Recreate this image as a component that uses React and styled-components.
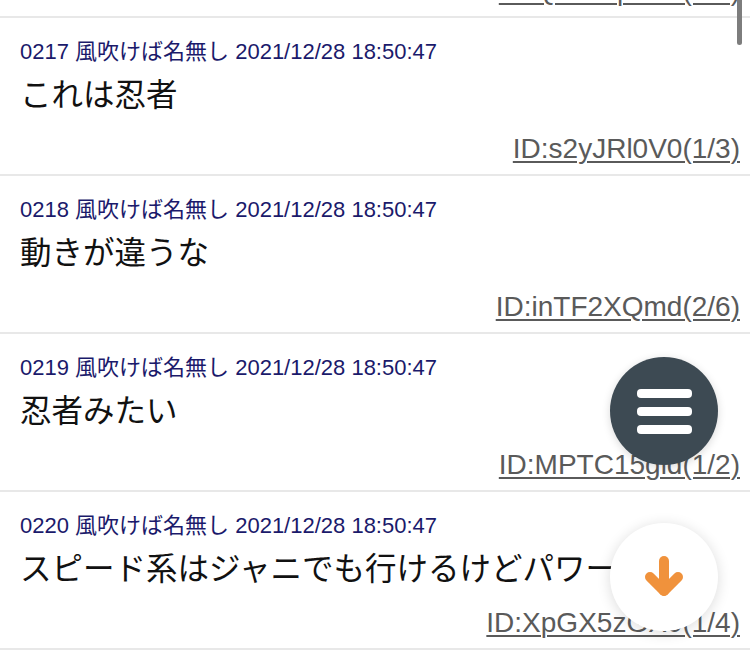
import styled, { createGlobalStyle } from "styled-components";

const posts = [
  { no: "0216", body: "せやな", id: "ID:Qk8vZp1aA(2/5)" },
  { no: "0217", body: "これは忍者", id: "ID:s2yJRl0V0(1/3)" },
  { no: "0218", body: "動きが違うな", id: "ID:inTF2XQmd(2/6)" },
  { no: "0219", body: "忍者みたい", id: "ID:MPTC15gld(1/2)" },
  {
    no: "0220",
    body: "スピード系はジャニでも行けるけどパワー系は",
    id: "ID:XpGX5zGX0(1/4)",
  },
];

export default function App() {
  return (
    <>
      <Global />
      <Screen>
        <List>
          {posts.map((p) => (
            <Post key={p.no}>
              <Meta>
                {p.no} 風吹けば名無し 2021/12/28 18:50:47
              </Meta>
              <Body>{p.body}</Body>
              <IdRow>
                <IdLink href="#">{p.id}</IdLink>
              </IdRow>
            </Post>
          ))}
        </List>
        <Scrollbar />
        <Fabs>
          <MenuButton aria-label="menu">
            <Bar />
            <Bar />
            <Bar />
          </MenuButton>
          <DownButton aria-label="down">
            <svg width="44" height="44" viewBox="0 0 44 44">
              <g
                fill="none"
                stroke="#f0923c"
                strokeWidth="10"
                strokeLinecap="round"
                strokeLinejoin="round"
              >
                <path d="M22 6 V36" />
                <path d="M8 22 L22 36 L36 22" />
              </g>
            </svg>
          </DownButton>
        </Fabs>
      </Screen>
    </>
  );
}

const Global = createGlobalStyle`
  html, body {
    margin: 0;
    padding: 0;
    background: #fff;
  }
  body {
    font-family: "Liberation Sans", Arial, "Noto Sans CJK JP", sans-serif;
  }
`;

const Screen = styled.div`
  position: relative;
  width: 750px;
  height: 656px;
  overflow: hidden;
  background: #fff;
`;

const List = styled.div`
  margin-top: -140px;
`;

const Post = styled.div`
  border-bottom: 2px solid #e8e8e8;
  padding: 20px 10px 8px 20px;
`;

const Meta = styled.div`
  color: #1b1a6b;
  font-size: 22px;
  line-height: 28px;
  white-space: nowrap;
`;

const Body = styled.div`
  margin-top: 6px;
  color: #111;
  font-size: 31.5px;
  line-height: 46px;
  white-space: nowrap;
  overflow: hidden;
`;

const IdRow = styled.div`
  display: flex;
  justify-content: flex-end;
  margin-top: 14px;
`;

const IdLink = styled.a`
  color: #5a5a5a;
  font-size: 28px;
  line-height: 34px;
  text-decoration: underline;
  text-decoration-thickness: 2px;
  text-underline-offset: 3px;
`;

const Scrollbar = styled.div`
  position: absolute;
  top: -6px;
  right: 8px;
  width: 5px;
  height: 51px;
  border-radius: 3px;
  background: #7d7d7d;
`;

const Fabs = styled.div`
  position: absolute;
  right: 32px;
  bottom: 25px;
  display: flex;
  flex-direction: column;
  gap: 58px;
`;

const Circle = styled.button`
  width: 108px;
  height: 108px;
  border-radius: 50%;
  border: none;
  padding: 0;
  display: flex;
  align-items: center;
  justify-content: center;
`;

const MenuButton = styled(Circle)`
  background: #3d4a53;
  flex-direction: column;
  gap: 9px;
  box-shadow: 0 2px 8px rgba(0, 0, 0, 0.15);
`;

const Bar = styled.span`
  display: block;
  width: 55px;
  height: 9px;
  border-radius: 4px;
  background: #fff;
`;

const DownButton = styled(Circle)`
  background: #fff;
  box-shadow: 0 2px 14px rgba(0, 0, 0, 0.14);
`;
